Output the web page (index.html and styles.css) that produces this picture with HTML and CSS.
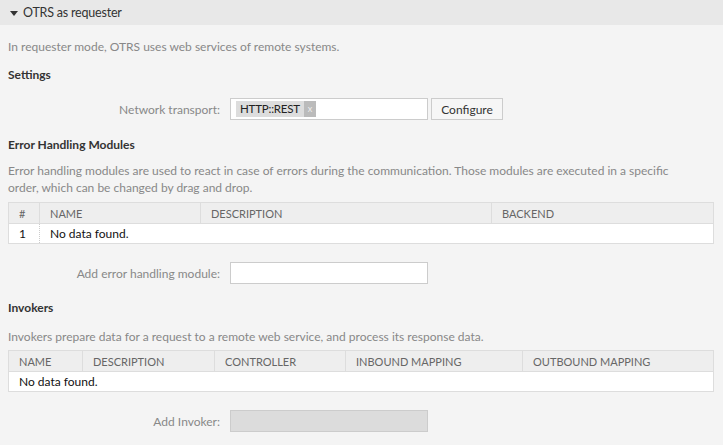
FILE: index.html
```html
<!DOCTYPE html>
<html>
<head>
<meta charset="utf-8">
<link rel="stylesheet" href="styles.css">
</head>
<body>
<div class="widget">
  <div class="header">
    <span class="tri"></span>
    <span class="title">OTRS as requester</span>
  </div>
  <div class="content">
    <p class="desc intro">In requester mode, OTRS uses web services of remote systems.</p>
    <h3 class="h h-settings">Settings</h3>
    <div class="field f-transport">
      <label class="lbl">Network transport:</label>
      <div class="input">
        <span class="tag">HTTP::REST<span class="x">x</span></span>
      </div>
      <button class="btn">Configure</button>
    </div>
    <h3 class="h h-err">Error Handling Modules</h3>
    <p class="desc desc2">Error handling modules are used to react in case of errors during the communication. Those modules are executed in a specific order, which can be changed by drag and drop.</p>
    <table class="tbl t1">
      <thead>
        <tr><th class="c-num">#</th><th class="c-name">NAME</th><th class="c-desc">DESCRIPTION</th><th>BACKEND</th></tr>
      </thead>
      <tbody>
        <tr><td class="c-num dotted">1</td><td colspan="3">No data found.</td></tr>
      </tbody>
    </table>
    <div class="field f-add">
      <label class="lbl">Add error handling module:</label>
      <div class="input"></div>
    </div>
    <h3 class="h h-inv">Invokers</h3>
    <p class="desc desc3">Invokers prepare data for a request to a remote web service, and process its response data.</p>
    <table class="tbl t2">
      <thead>
        <tr><th class="c2-name">NAME</th><th class="c2-desc">DESCRIPTION</th><th class="c2-ctrl">CONTROLLER</th><th class="c2-in">INBOUND MAPPING</th><th>OUTBOUND MAPPING</th></tr>
      </thead>
      <tbody>
        <tr><td colspan="5">No data found.</td></tr>
      </tbody>
    </table>
    <div class="field f-add2">
      <label class="lbl">Add Invoker:</label>
      <div class="input disabled"></div>
    </div>
  </div>
</div>
</body>
</html>
```
FILE: styles.css
```css
html, body {
  margin: 0;
  padding: 0;
  background: #f4f4f4;
}
body {
  font-family: Lato, "Open Sans", sans-serif;
  font-size: 12px;
  color: #333;
  width: 723px;
  height: 445px;
  overflow: hidden;
}
.header {
  height: 25px;
  background: #e8e8e8;
  display: flex;
  align-items: center;
  padding-left: 10px;
  gap: 5px;
}
.tri {
  width: 0;
  height: 0;
  border-left: 4px solid transparent;
  border-right: 4px solid transparent;
  border-top: 5px solid #333;
  margin-top: 1px;
}
.title {
  font-size: 12.5px;
  color: #333;
  letter-spacing: -0.2px;
}
.content {
  padding: 0 9px 0 8px;
}
.desc {
  margin: 0;
  color: #888;
  line-height: 17px;
}
.intro { margin-top: 13px; }
.h {
  margin: 0;
  font-size: 12px;
  font-weight: bold;
  line-height: 16px;
  color: #333;
}
.h-settings { margin-top: 12px; }
.field {
  display: flex;
  align-items: center;
}
.lbl {
  width: 212px;
  text-align: right;
  color: #888;
  margin-right: 10px;
}
.input {
  width: 191px;
  height: 20px;
  border: 1px solid #ccc;
  background: #fff;
  display: flex;
  align-items: center;
  padding-left: 5px;
  box-sizing: content-box;
}
.f-add .input, .f-add2 .input { width: 196px; padding-left: 0; }
.input.disabled { background: #dcdcdc; border-color: #ccc; }
.f-transport { margin-top: 15px; }
.tag {
  background: #ddd;
  height: 16px;
  line-height: 16px;
  padding-left: 4px;
  display: flex;
  align-items: center;
  font-size: 11.5px;
  color: #222;
  gap: 4px;
  letter-spacing: -0.2px;
}
.x {
  background: #bbb;
  color: #eee;
  width: 12px;
  height: 16px;
  text-align: center;
  font-size: 9px;
}
.btn {
  margin-left: 3px;
  height: 22px;
  width: 72px;
  border: 1px solid #ccc;
  background: #f6f6f6;
  font-family: inherit;
  font-size: 12px;
  color: #333;
  padding: 0;
}
.h-err { margin-top: 17px; }
.desc2 { margin-top: 9px; max-width: 692px; }
.tbl {
  width: 706px;
  border-collapse: collapse;
  border: 1px solid #ddd;
  background: #fff;
}
.t1 { margin-top: 6px; }
.tbl th {
  background: #eee;
  font-weight: normal;
  color: #666;
  font-size: 11px;
  text-align: left;
  height: 20px;
  padding: 0 0 0 10px;
  border-right: 1px solid #ddd;
  border-bottom: 1px solid #ddd;
}
.tbl th:last-child { border-right: none; }
.tbl td {
  height: 19px;
  padding: 0 0 0 10px;
  color: #111;
}
.dotted { border-right: 1px dotted #ccc; }
.c-num { width: 20px; }
.c-name { width: 150px; }
.c-desc { width: 280px; }
.c2-name { width: 63px; }
.c2-desc { width: 121px; }
.c2-ctrl { width: 120px; }
.c2-in { width: 166px; }
.f-add { margin-top: 18px; }
.h-inv { margin-top: 16px; }
.desc3 { margin-top: 12px; }
.t2 { margin-top: 5px; }
.f-add2 { margin-top: 18px; }
```
